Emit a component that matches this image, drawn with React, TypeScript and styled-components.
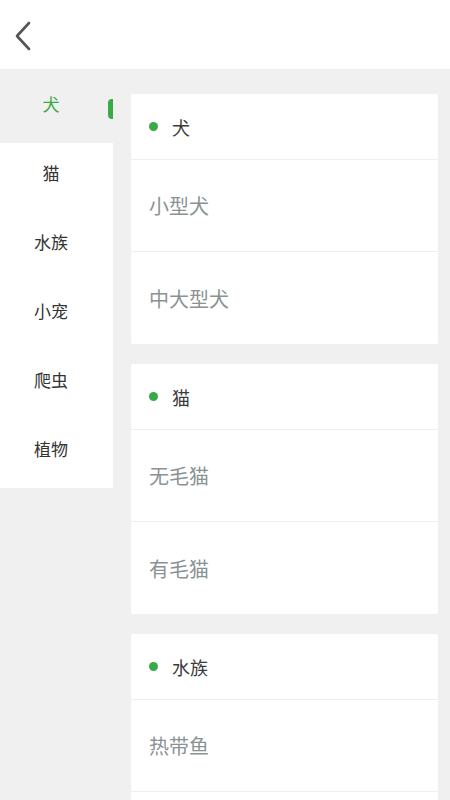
import styled, { createGlobalStyle } from "styled-components";

const GlobalStyle = createGlobalStyle`
  html, body {
    margin: 0;
    padding: 0;
    background: #f0f0f0;
  }
  body {
    font-family: "Noto Sans CJK SC", "Noto Sans", sans-serif;
    -webkit-font-smoothing: antialiased;
  }
  * {
    box-sizing: border-box;
  }
`;

const categories = ["犬", "猫", "水族", "小宠", "爬虫", "植物"];

// the last group continues below the fold, so it ends with a blank row
const groups = [
  { title: "犬", items: ["小型犬", "中大型犬"], more: false },
  { title: "猫", items: ["无毛猫", "有毛猫"], more: false },
  { title: "水族", items: ["热带鱼"], more: true },
];

const App = () => {
  return (
    <Page>
      <GlobalStyle />
      <TopBar>
        <BackButton aria-label="返回">
          <svg width="20" height="32" viewBox="0 0 20 32" fill="none">
            <path
              d="M16 3 L4 16 L16 29"
              stroke="#555"
              strokeWidth="2.6"
              strokeLinecap="round"
              strokeLinejoin="round"
            />
          </svg>
        </BackButton>
      </TopBar>
      <Body>
        <Sidebar>
          {categories.map((name, i) => (
            <SideItem key={name} $active={i === 0}>
              {name}
              {i === 0 && <Indicator />}
            </SideItem>
          ))}
        </Sidebar>
        <Content>
          {groups.map((group) => (
            <Card key={group.title}>
              <CardHeader>
                <Dot />
                <CardTitle>{group.title}</CardTitle>
              </CardHeader>
              {group.items.map((item) => (
                <Row key={item}>{item}</Row>
              ))}
              {group.more && <Row aria-hidden />}
            </Card>
          ))}
        </Content>
      </Body>
    </Page>
  );
};

const Page = styled.div`
  width: 450px;
  height: 800px;
  overflow: hidden;
  background: #f0f0f0;
  display: flex;
  flex-direction: column;
`;

const TopBar = styled.div`
  height: 69px;
  background: #fff;
  display: flex;
  align-items: center;
  padding-left: 11px;
  flex-shrink: 0;
`;

const BackButton = styled.button`
  all: unset;
  display: flex;
  align-items: center;
  justify-content: center;
  width: 24px;
  height: 40px;
  margin-top: 3px;
  cursor: pointer;
`;

const Body = styled.div`
  display: flex;
  align-items: flex-start;
  flex: 1;
`;

const Sidebar = styled.div`
  width: 113px;
  flex-shrink: 0;
  display: flex;
  flex-direction: column;
`;

const SideItem = styled.div<{ $active?: boolean }>`
  position: relative;
  height: ${(p) => (p.$active ? "74px" : "69px")};
  padding-bottom: ${(p) => (p.$active ? "5px" : "10px")};
  display: flex;
  align-items: center;
  justify-content: center;
  padding-right: 11px;
  font-size: 17px;
  color: ${(p) => (p.$active ? "#3aaa48" : "#333")};
  background: ${(p) => (p.$active ? "#f0f0f0" : "#fff")};
`;

const Indicator = styled.span`
  position: absolute;
  right: 0;
  top: 30px;
  width: 5px;
  height: 20px;
  background: #3aaa48;
  border-radius: 4px 0 0 4px;
`;

const Content = styled.div`
  flex: 1;
  padding: 25px 12px 0 18px;
  display: flex;
  flex-direction: column;
  gap: 20px;
`;

const Card = styled.div`
  background: #fff;
  border-radius: 2px;
  display: flex;
  flex-direction: column;
`;

const CardHeader = styled.div`
  height: 66px;
  display: flex;
  align-items: center;
  padding-left: 18px;
  gap: 14px;
  border-bottom: 1px solid #eeeeee;
`;

const Dot = styled.span`
  width: 9px;
  height: 9px;
  border-radius: 50%;
  background: #3aaa48;
`;

const CardTitle = styled.span`
  font-size: 18px;
  color: #3a3a3a;
`;

const Row = styled.div`
  height: 92px;
  flex-shrink: 0;
  display: flex;
  align-items: center;
  padding-left: 18px;
  font-size: 20px;
  color: #8a9294;
  border-bottom: 1px solid #eeeeee;

  &:last-child {
    border-bottom: none;
  }
`;

export default App;
